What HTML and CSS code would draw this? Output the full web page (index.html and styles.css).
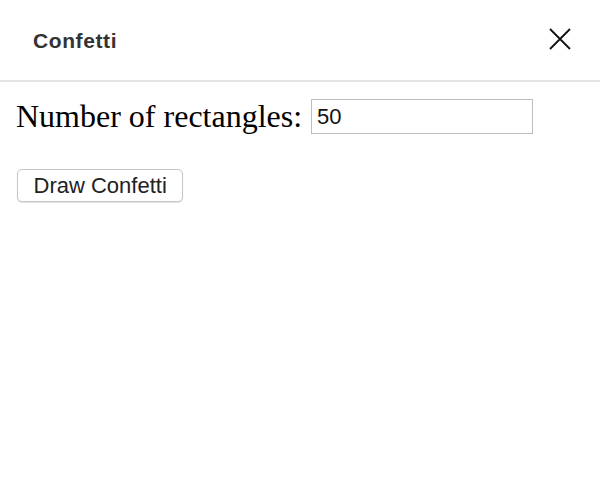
FILE: index.html
```html
<!DOCTYPE html>
<html>
<head>
<meta charset="utf-8">
<link rel="stylesheet" href="styles.css">
</head>
<body>
<div class="dialog">
  <header class="header">
    <h1 class="title">Confetti</h1>
    <button class="close" aria-label="Close">
      <svg width="22" height="22" viewBox="0 0 22 22"><path d="M1 1L21 21M21 1L1 21" stroke="#111" stroke-width="1.8" fill="none"/></svg>
    </button>
  </header>
  <main class="content">
    <div class="row">
      <label class="label" for="count">Number of rectangles:</label>
      <input id="count" class="field" type="text" value="50">
    </div>
    <button class="draw">Draw Confetti</button>
  </main>
</div>
</body>
</html>
```
FILE: styles.css
```css
html, body {
  margin: 0;
  padding: 0;
  background: #fff;
}
.dialog {
  width: 600px;
  height: 482px;
  display: flex;
  flex-direction: column;
}
.header {
  box-sizing: border-box;
  border-bottom: 2px solid #e3e3e3;
  display: flex;
  align-items: center;
  justify-content: space-between;
  padding: 0 29px 0 33px;
  height: 82px;
}
.title {
  margin: 0;
  font-family: "Liberation Sans", Arial, sans-serif;
  font-weight: 700;
  font-size: 21px;
  letter-spacing: 0.6px;
  color: #333;
  padding-top: 2px;
}
.close {
  border: 0;
  background: none;
  padding: 0;
  width: 22px;
  height: 22px;
  display: flex;
  margin-bottom: 2px;
}
.content {
  padding: 16px 16px;
  display: flex;
  flex-direction: column;
  align-items: flex-start;
}
.row {
  display: flex;
  align-items: center;
  gap: 9px;
}
.label {
  font-family: "Liberation Serif", serif;
  font-size: 32px;
  color: #000;
}
.field {
  width: 222px;
  height: 35px;
  box-sizing: border-box;
  border: 1px solid #bdbdbd;
  border-radius: 0;
  padding: 0 5px;
  font-family: "Liberation Sans", Arial, sans-serif;
  font-size: 22px;
  color: #111;
  outline: none;
}
.draw {
  margin-top: 34px;
  margin-left: 1px;
  height: 33px;
  box-sizing: border-box;
  padding: 0 15.5px;
  border: 1px solid #c6c6c6;
  border-radius: 5px;
  background: #fff;
  box-shadow: 0 1px 1px rgba(0,0,0,0.12);
  font-family: "Liberation Sans", Arial, sans-serif;
  font-size: 22px;
  color: #222;
}
```
